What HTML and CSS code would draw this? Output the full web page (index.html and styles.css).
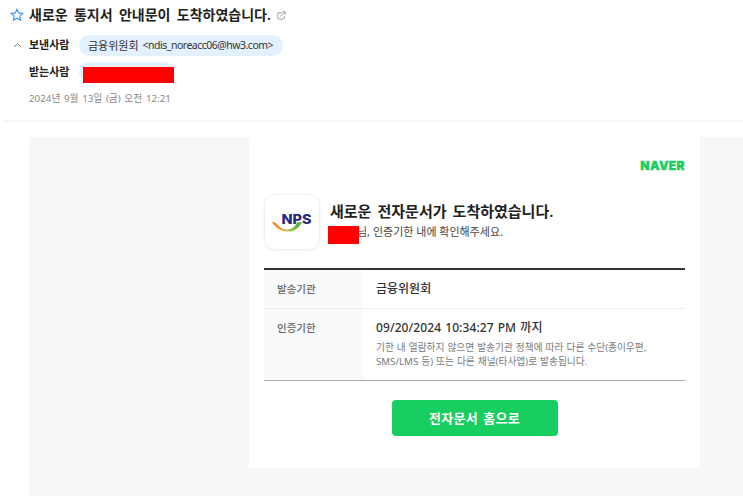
FILE: index.html
```
<!DOCTYPE html>
<html lang="ko">
<head>
<meta charset="UTF-8">
<title>새로운 통지서 안내문이 도착하였습니다.</title>
<meta name="viewport" content="width=device-width, initial-scale=1.0">
<link rel="stylesheet" href="styles.css">
</head>

<body>

<header class="mail-header">
  <div class="subject-row">
    <svg class="star" width="14" height="14" viewBox="0 0 14 14"><path d="M7 1.200l1.700 3.700 4.100.5-3 2.800.8 4L7 10.200l-3.600 2 .8-4-3-2.800 4.100-.5z"/></svg>
    <h1 class="subject">새로운 통지서 안내문이 도착하였습니다.</h1>
    <svg class="popout" width="9" height="9" viewBox="0 0 10 10"><path d="M5 1.800H2.200Q1 1.800 1 3v4.800Q1 9 2.200 9H7q1.200 0 1.200-1.200V5.500M5.800 1H9v3.200M9 1L4 6"/></svg>
  </div>
  <div class="person-row">
    <svg class="fold" width="9" height="6" viewBox="0 0 9 6"><path d="M1 5l3.500-3.500L8 5"/></svg>
    <span class="label">보낸사람</span>
    <span class="pill"><span class="name">금융위원회</span><span class="address">&lt;ndis_noreacc06@hw3.com&gt;</span></span>
  </div>
  <div class="person-row receiver">
    <span class="label">받는사람</span>
    <span class="pill pill-hidden"><span class="mask"></span></span>
  </div>
  <p class="date">2024년 9월 13일 (금) 오전 12:21</p>
</header>

<main class="mail-body">
  <section class="card">
    <div class="brand"><span>NAVER</span></div>

    <div class="intro">
      <div class="logo">
        <svg width="42" height="24" viewBox="0 0 42 24">
          <defs>
            <linearGradient id="smile" x1="0" x2="1">
              <stop offset="0" stop-color="#f47b20"/>
              <stop offset=".35" stop-color="#f3a52c"/>
              <stop offset=".58" stop-color="#a5c840"/>
              <stop offset="1" stop-color="#3fa548"/>
            </linearGradient>
          </defs>
          <path fill="url(#smile)" d="M0 10q2-.5 4 1c4 5 8 7 12 6.500 5-.8 7-3.500 9-6.500l-1.500-.5 6.500-.5c-3 6-7 9-13 9.500C9 20 4 16 0 10z"/>
          <text class="logo-text" x="9.500" y="12" textLength="30" lengthAdjust="spacingAndGlyphs">NPS</text>
        </svg>
      </div>
      <div class="intro-text">
        <h2>새로운 전자문서가 도착하였습니다.</h2>
        <p><span class="mask mask-name"></span><span class="guide">님, 인증기한 내에 확인해주세요.</span></p>
      </div>
    </div>

    <dl class="info">
      <div class="info-row">
        <dt>발송기관</dt>
        <dd><strong class="agency">금융위원회</strong></dd>
      </div>
      <div class="info-row due">
        <dt>인증기한</dt>
        <dd>
          <strong class="until">09/20/2024 10:34:27 PM 까지</strong>
          <p class="note note-first">기한 내 열람하지 않으면 발송기관 정책에 따라 다른 수단(종이우편,</p>
          <p class="note">SMS/LMS 등) 또는 다른 채널(타사앱)로 발송됩니다.</p>
        </dd>
      </div>
    </dl>

    <a class="home-button" href="#">전자문서 홈으로</a>
  </section>
</main>

</body>
</html>
```

FILE: styles.css
```
* {
  box-sizing: border-box;
}

body {
  margin: 0;
  height: 497px;
  overflow: hidden;
  background: #fff;
  color: #222;
  font-family: "Noto Sans", "Noto Sans CJK KR", sans-serif;
}

h1, h2, p, dl, dd {
  margin: 0;
}

svg {
  display: block;
  flex: none;
  fill: none;
}

h1, h2, p, span, dt, strong, a {
  white-space: nowrap;
}

/* mail header */
.mail-header {
  height: 122px;
  margin-left: 3px;
  padding: 4px 0 0 7px;
  border-bottom: 2px solid #f7f7f7;
}

.subject-row {
  display: flex;
  align-items: center;
  height: 22px;
}

.star {
  stroke: #3d8df5;
  stroke-width: 1.1;
}

.subject {
  margin-left: 5px;
  font-size: 14px;
  font-weight: 600;
  line-height: 20px;
  word-spacing: 2.7px;
}

.popout {
  margin-left: 6px;
  stroke: #888;
  stroke-width: .9;
}

.person-row {
  display: flex;
  align-items: center;
  height: 22px;
  margin-top: 8px;
  padding-left: 3px;
}

.receiver {
  margin-top: 5px;
  padding-left: 19px;
}

.fold {
  margin-right: 7px;
  stroke: #888;
}

.label {
  width: 50px;
  font-size: 11px;
  font-weight: 600;
  line-height: 22px;
}

.pill {
  display: flex;
  height: 21px;
  padding: 0 10px 0 9px;
  border-radius: 11px;
  background: #e3f0fd;
  font-size: 11px;
  line-height: 21px;
  color: #333;
}

.address {
  margin-left: 4px;
  font-size: 10.5px;
  letter-spacing: -.5px;
}

.pill-hidden {
  position: relative;
  width: 96px;
}

.mask {
  position: absolute;
  top: 5px;
  left: 4px;
  width: 91px;
  height: 16px;
  background: #f00;
}

.date {
  margin: 7px 0 0 19px;
  font-size: 9.8px;
  line-height: 18px;
  word-spacing: 1px;
  color: #888;
}

/* mail body */
.mail-body {
  height: 359px;
  margin: 15px 0 0 29px;
  padding-left: 220px;
  background: #f7f7f7;
}

.card {
  width: 451px;
  height: 331px;
  padding: 22px 15px 0;
  background: #fff;
}

.brand {
  display: flex;
  justify-content: flex-end;
  height: 35px;
  color: #19ce60;
  font-family: Inter, sans-serif;
  font-size: 12px;
  font-weight: 900;
  line-height: 14px;
  letter-spacing: .4px;
  -webkit-text-stroke: .4px #19ce60;
}

.intro {
  display: flex;
}

.logo {
  width: 56px;
  height: 56px;
  padding: 17px 7px;
  border: 1px solid #f1f1f3;
  border-radius: 11px;
  box-shadow: 0 1px 3px rgba(0, 0, 0, .06);
}

.logo-text {
  fill: #29297d;
  font-family: Inter, sans-serif;
  font-size: 13px;
  font-weight: 800;
}

.intro-text {
  margin-left: 10px;
  padding-top: 6px;
}

.intro-text h2 {
  font-size: 15px;
  font-weight: 600;
  line-height: 22px;
  word-spacing: 2.2px;
}

.intro-text p {
  position: relative;
  padding-left: 27px;
  font-size: 11px;
  line-height: 19px;
  color: #444;
}

.mask-name {
  z-index: 1;
  top: 4px;
  left: -2px;
  width: 31px;
  height: 18px;
}

/* document info */
.info {
  margin-top: 18px;
  border-top: 2px solid #333;
  border-bottom: 1px solid #aaa;
}

.info-row {
  display: flex;
  height: 38px;
}

.due {
  height: 72px;
  border-top: 1px solid #eee;
}

.info dt {
  width: 99px;
  padding: 10px 13px;
  background: #f8fafc;
  font-size: 10.5px;
  font-weight: 500;
  line-height: 18px;
  color: #666;
}

.info dd {
  padding: 9px 13px;
}

.info strong {
  display: block;
  font-size: 12px;
  font-weight: 500;
  line-height: 20px;
  color: #333;
}

.info .until {
  letter-spacing: .1px;
  word-spacing: .8px;
}

.note {
  font-size: 9.7px;
  line-height: 14px;
  word-spacing: .5px;
  color: #777c80;
}

.note-first {
  margin-top: 3px;
}

.home-button {
  display: block;
  width: 166px;
  height: 36px;
  margin: 19px auto 0;
  border-radius: 4px;
  background: #19ce60;
  color: #fff;
  font-size: 13px;
  font-weight: 600;
  line-height: 36px;
  letter-spacing: .3px;
  word-spacing: 1.5px;
  text-align: center;
  text-decoration: none;
}
```
